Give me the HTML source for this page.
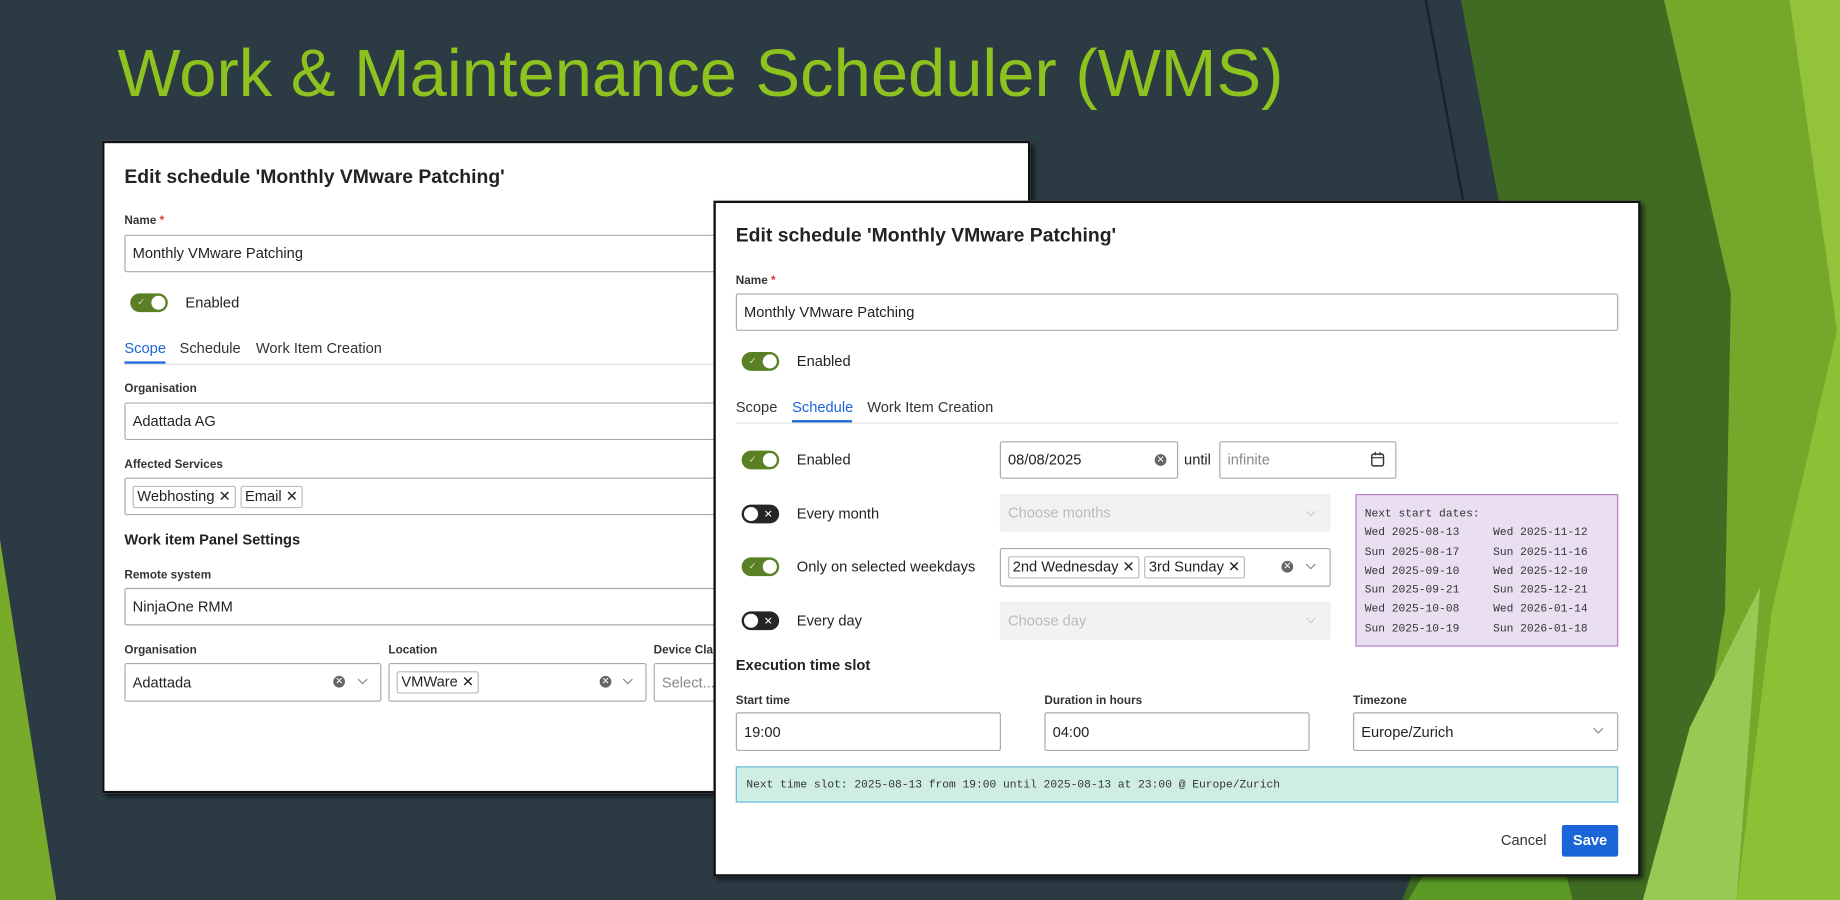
<!DOCTYPE html>
<html><head><meta charset="utf-8"><style>
*{box-sizing:border-box;margin:0;padding:0}
body{width:1840px;height:900px;overflow:hidden;background:#2b3a43;font-family:"Liberation Sans",sans-serif;color:#222}
#w{position:absolute;left:0;top:0;width:1568px;height:767px;transform:scale(1.17347);transform-origin:0 0}
.a{position:absolute}
.panel{position:absolute;background:#fff;border:2px solid #111;box-shadow:3px 3px 4px rgba(0,0,0,.6)}
.h{font-weight:bold;font-size:16.5px;color:#222}
.lb{font-size:10px;font-weight:bold;color:#333}
.req{color:#d33}
.in{position:absolute;border:1px solid #aaa;border-radius:2px;background:#fff;font-size:12.5px;color:#222;display:flex;align-items:center;padding-left:6px}
.dis{background:#f2f2f2;border-color:#eee;color:#bbb}
.tog{position:absolute;width:32px;height:16px;border-radius:8px;background:#5a7f25}
.tog::after{content:"";position:absolute;right:2px;top:2px;width:12px;height:12px;border-radius:50%;background:#fff}
.tog .c{position:absolute;left:6px;top:2px;font-size:8px;line-height:12px;color:#cfe5b0}
.off{background:#262626}
.off::after{left:2px;right:auto}
.off .c{left:19px;color:#fff;font-size:9px;top:2px}
.txt{position:absolute;font-size:12.5px;color:#222}
.tab{position:absolute;font-size:12.5px;color:#333}
.chip{display:inline-block;border:1px solid #bbb;border-radius:2px;padding:1px 3px;font-size:12.5px;margin-right:4px;line-height:15px}
.clr{position:absolute;width:10px;height:10px;border-radius:50%;background:#666;color:#fff;font-size:8px;line-height:10px;text-align:center}
.chev{position:absolute;width:6px;height:6px;border-right:1px solid #888;border-bottom:1px solid #888;transform:rotate(45deg)}
.mono{font-family:"Liberation Mono",monospace;font-size:9.6px;color:#333}
</style></head><body><div id="w">
<svg class="a" style="left:0;top:0" width="1568" height="767">
<polygon points="1245,0 1568,0 1568,767 1195,767 1330,420 1275,160" fill="#3f6b23"/>
<polygon points="1418,0 1568,0 1568,767 1430,767 1470,520 1475,250" fill="#75a72a"/>
<polygon points="1480,767 1568,767 1568,270 1510,520" fill="#8cc035"/>
<polygon points="1525,0 1568,0 1568,300" fill="#93c23b"/>
<polygon points="1440,620 1500,500 1480,767 1400,767" fill="#9ac855"/>
<polygon points="1200,767 1300,600 1340,767" fill="#5a9a25"/>
<polygon points="0,460 48,767 0,767" fill="#79ab2a"/>
<line x1="1215" y1="0" x2="1247" y2="172" stroke="#1a2328" stroke-width="2"/>
</svg>
<div class="a" style="left:100px;top:30px;font-size:57px;color:#8dc21f;letter-spacing:0;white-space:nowrap">Work &amp; Maintenance Scheduler (WMS)</div>

<!-- back panel -->
<div class="panel" style="left:87px;top:120px;width:791px;height:556px"></div>
<div class="a h" style="left:106px;top:142px">Edit schedule 'Monthly VMware Patching'</div>
<div class="a lb" style="left:106px;top:183px">Name <span class="req">*</span></div>
<div class="in" style="left:106px;top:200px;width:520px;height:32px">Monthly VMware Patching</div>
<div class="tog" style="left:111px;top:250px"><span class="c">✓</span></div>
<div class="txt" style="left:158px;top:251px">Enabled</div>
<div class="tab" style="left:106px;top:290px;color:#1a66d9">Scope</div>
<div class="a" style="left:106px;top:308px;width:35px;height:2px;background:#1a66d9"></div>
<div class="tab" style="left:153px;top:290px">Schedule</div>
<div class="tab" style="left:218px;top:290px">Work Item Creation</div>
<div class="a" style="left:106px;top:310px;width:510px;height:1px;background:#e3e3e3"></div>
<div class="a lb" style="left:106px;top:326px">Organisation</div>
<div class="in" style="left:106px;top:343px;width:520px;height:32px">Adattada AG</div>
<div class="a lb" style="left:106px;top:391px">Affected Services</div>
<div class="in" style="left:106px;top:407px;width:520px;height:32px"><span class="chip">Webhosting ✕</span><span class="chip">Email ✕</span></div>
<div class="a" style="left:106px;top:453px;font-size:12.5px;font-weight:bold">Work item Panel Settings</div>
<div class="a lb" style="left:106px;top:485px">Remote system</div>
<div class="in" style="left:106px;top:501px;width:520px;height:32px">NinjaOne RMM</div>
<div class="a lb" style="left:106px;top:549px">Organisation</div>
<div class="a lb" style="left:331px;top:549px">Location</div>
<div class="a lb" style="left:557px;top:549px">Device Cla</div>
<div class="in" style="left:106px;top:565px;width:219px;height:33px">Adattada</div>
<div class="clr" style="left:284px;top:576px">✕</div><div class="chev" style="left:306px;top:576px"></div>
<div class="in" style="left:331px;top:565px;width:220px;height:33px"><span class="chip">VMWare ✕</span></div>
<div class="clr" style="left:511px;top:576px">✕</div><div class="chev" style="left:532px;top:576px"></div>
<div class="in" style="left:557px;top:565px;width:60px;height:33px;color:#888">Select...</div>

<!-- front panel -->
<div class="panel" style="left:608px;top:171px;width:790px;height:576px"></div>
<div class="a h" style="left:627px;top:192px">Edit schedule 'Monthly VMware Patching'</div>
<div class="a lb" style="left:627px;top:234px">Name <span class="req">*</span></div>
<div class="in" style="left:627px;top:250px;width:752px;height:32px">Monthly VMware Patching</div>
<div class="tog" style="left:632px;top:300px"><span class="c">✓</span></div>
<div class="txt" style="left:679px;top:301px">Enabled</div>
<div class="tab" style="left:627px;top:340px">Scope</div>
<div class="tab" style="left:675px;top:340px;color:#1a66d9">Schedule</div>
<div class="a" style="left:675px;top:358px;width:51px;height:2px;background:#1a66d9"></div>
<div class="tab" style="left:739px;top:340px">Work Item Creation</div>
<div class="a" style="left:627px;top:360px;width:752px;height:1px;background:#e3e3e3"></div>

<div class="tog" style="left:632px;top:384px"><span class="c">✓</span></div>
<div class="txt" style="left:679px;top:385px">Enabled</div>
<div class="in" style="left:852px;top:376px;width:152px;height:32px">08/08/2025</div>
<div class="clr" style="left:984px;top:387px">✕</div>
<div class="txt" style="left:1009px;top:385px">until</div>
<div class="in" style="left:1039px;top:376px;width:151px;height:32px;color:#888">infinite</div>
<svg class="a" style="left:1168px;top:385px" width="12" height="13"><rect x="1" y="2" width="10" height="10" rx="1.5" fill="none" stroke="#333" stroke-width="1.2"/><line x1="1" y1="5" x2="11" y2="5" stroke="#333"/><line x1="4" y1="0" x2="4" y2="3" stroke="#333"/><line x1="8" y1="0" x2="8" y2="3" stroke="#333"/></svg>

<div class="tog off" style="left:632px;top:430px"><span class="c">✕</span></div>
<div class="txt" style="left:679px;top:431px">Every month</div>
<div class="in dis" style="left:852px;top:421px;width:282px;height:32px">Choose months</div>
<div class="chev" style="left:1114px;top:433px;border-color:#ccc"></div>

<div class="tog" style="left:632px;top:475px"><span class="c">✓</span></div>
<div class="txt" style="left:679px;top:476px">Only on selected weekdays</div>
<div class="in" style="left:852px;top:467px;width:282px;height:33px"><span class="chip">2nd Wednesday ✕</span><span class="chip">3rd Sunday ✕</span></div>
<div class="clr" style="left:1092px;top:478px">✕</div><div class="chev" style="left:1114px;top:478px"></div>

<div class="tog off" style="left:632px;top:521px"><span class="c">✕</span></div>
<div class="txt" style="left:679px;top:522px">Every day</div>
<div class="in dis" style="left:852px;top:513px;width:282px;height:32px">Choose day</div>
<div class="chev" style="left:1114px;top:524px;border-color:#ccc"></div>

<div class="a mono" style="left:1155px;top:421px;width:224px;height:130px;background:#eadff0;border:1px solid #b27ec8;padding:8px 0 0 7px;line-height:16.3px;white-space:pre">Next start dates:
Wed 2025-08-13     Wed 2025-11-12
Sun 2025-08-17     Sun 2025-11-16
Wed 2025-09-10     Wed 2025-12-10
Sun 2025-09-21     Sun 2025-12-21
Wed 2025-10-08     Wed 2026-01-14
Sun 2025-10-19     Sun 2026-01-18</div>

<div class="a" style="left:627px;top:560px;font-size:12.5px;font-weight:bold">Execution time slot</div>
<div class="a lb" style="left:627px;top:592px">Start time</div>
<div class="a lb" style="left:890px;top:592px">Duration in hours</div>
<div class="a lb" style="left:1153px;top:592px">Timezone</div>
<div class="in" style="left:627px;top:607px;width:226px;height:33px">19:00</div>
<div class="in" style="left:890px;top:607px;width:226px;height:33px">04:00</div>
<div class="in" style="left:1153px;top:607px;width:226px;height:33px">Europe/Zurich</div>
<div class="chev" style="left:1359px;top:618px"></div>
<div class="a mono" style="left:627px;top:653px;width:752px;height:31px;background:#cfeee3;border:1px solid #6cb6dc;padding:9px 0 0 8px">Next time slot: 2025-08-13 from 19:00 until 2025-08-13 at 23:00 @ Europe/Zurich</div>
<div class="a" style="left:1279px;top:709px;font-size:12.5px;color:#333">Cancel</div>
<div class="a" style="left:1331px;top:703px;width:48px;height:27px;background:#1a66d9;border-radius:2px;color:#fff;font-weight:bold;font-size:12.5px;text-align:center;line-height:27px">Save</div>
</div></body></html>
